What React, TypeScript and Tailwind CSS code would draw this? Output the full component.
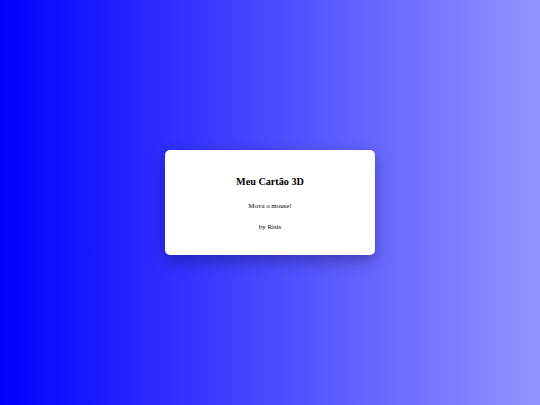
export default function App() {
  return (
    <div className="w-full h-[405px] flex items-center justify-center bg-[linear-gradient(to_right,#0000ff,#9494ff)] font-['Liberation_Serif',serif] text-black">
      <div className="w-[210px] h-[105px] bg-white rounded-[5px] shadow-[0_6px_16px_rgba(0,0,40,0.35)] flex flex-col items-center pt-[26px]">
        <h2 className="text-[10.2px] leading-[12px] font-bold">Meu Cartão 3D</h2>
        <p className="text-[6.9px] leading-[8px] mt-[14px]">Mova o mouse!</p>
        <p className="text-[6.9px] leading-[8px] mt-[13px]">by Risis</p>
      </div>
    </div>
  );
}
